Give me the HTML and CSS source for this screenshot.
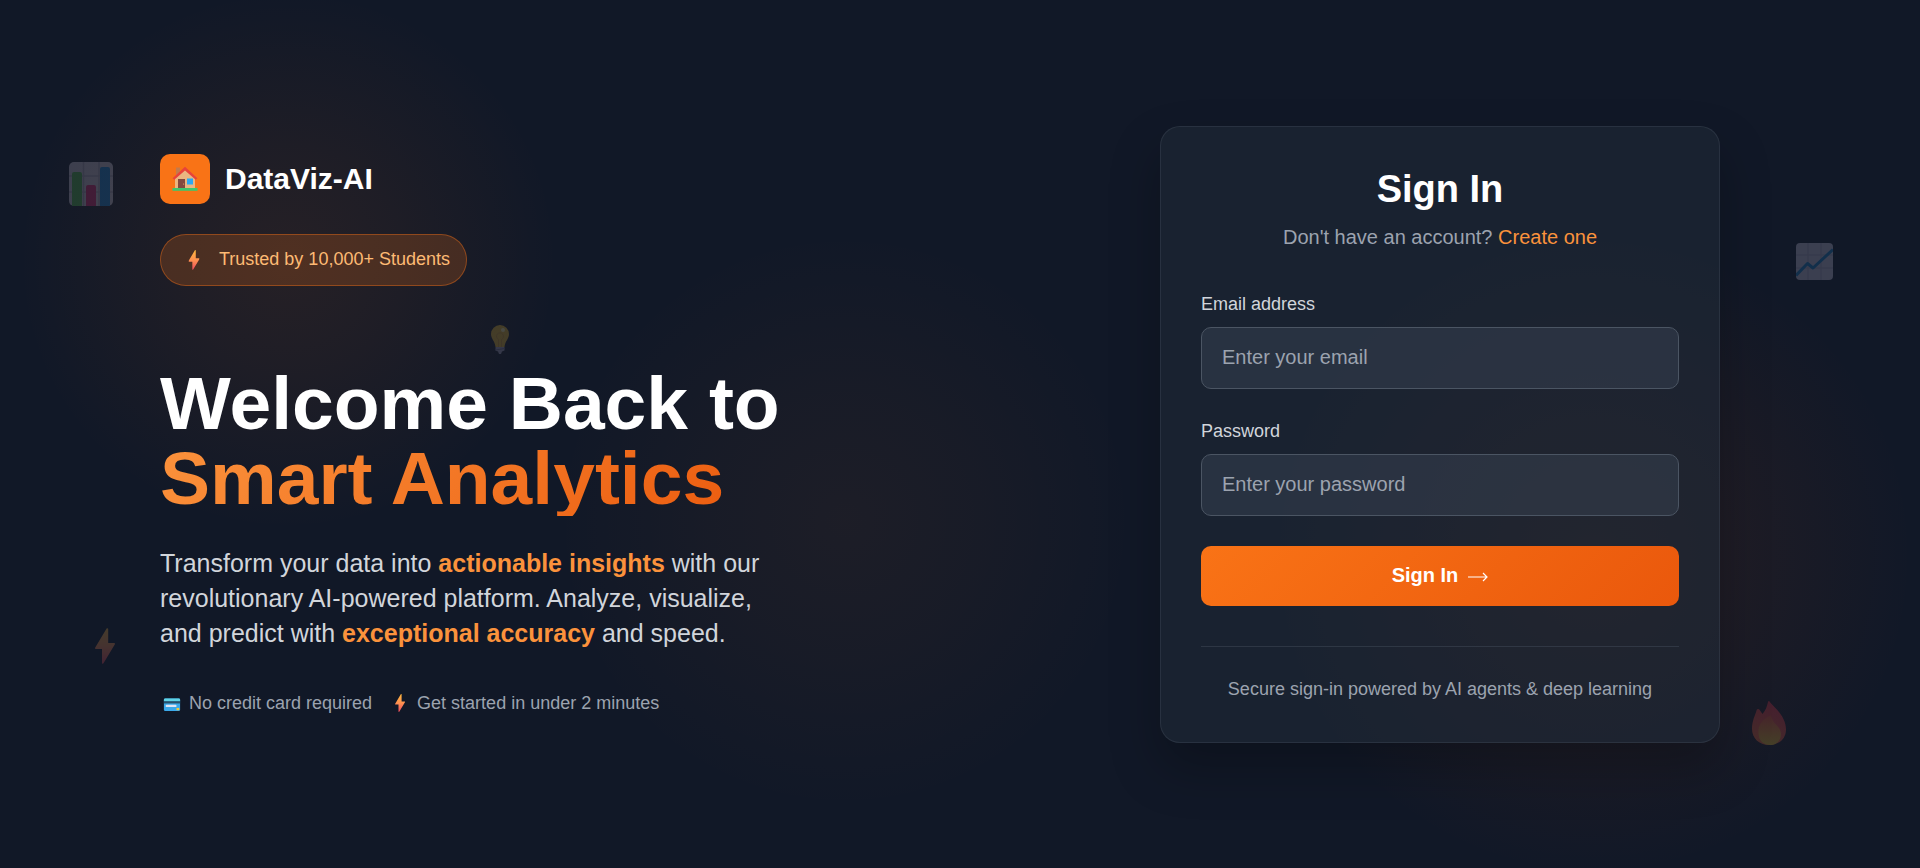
FILE: index.html
```html
<!DOCTYPE html>
<html lang="en">
<head>
<meta charset="utf-8">
<meta name="viewport" content="width=device-width, initial-scale=1">
<title>Sign In - DataViz-AI</title>
<link rel="stylesheet" href="styles.css">
</head>
<body>
<svg class="defs" width="0" height="0" aria-hidden="true">
  <defs>
    <linearGradient id="boltFill" x1="0" y1="0" x2="0" y2="1">
      <stop offset="0" stop-color="#ffb83d"/><stop offset=".5" stop-color="#ff9150"/><stop offset="1" stop-color="#ee4a5e"/>
    </linearGradient>
    <symbol id="bolt" viewBox="0 0 20 36">
      <path fill="url(#boltFill)" d="M11.600.6c.4-.8 1.600-.5 1.600.4V15h6c.7 0 1 .7.7 1.300L8.500 35.300c-.4.8-1.500.5-1.500-.4V21H.8c-.6 0-1-.7-.7-1.200z"/>
    </symbol>
  </defs>
</svg>
<main class="page">
  <div class="glow" aria-hidden="true"></div>

  <svg class="float float-bars" viewBox="0 0 44 44" aria-hidden="true">
    <rect width="44" height="44" rx="5" fill="#cfc8d8"/>
    <path d="M14.500 0v44M30 0v44M0 14h44M0 30h44" stroke="#aaa1b8" stroke-width="1.500"/>
    <path d="M3 44V12a2 2 0 0 1 2-2h6a2 2 0 0 1 2 2v32z" fill="#4fb548"/>
    <path d="M17 44V25a2 2 0 0 1 2-2h6a2 2 0 0 1 2 2v19z" fill="#d8256f"/>
    <path d="M31 44V7a2 2 0 0 1 2-2h6a2 2 0 0 1 2 2v37z" fill="#1384d8"/>
  </svg>
  <svg class="float float-line" viewBox="0 0 37 37" aria-hidden="true">
    <rect width="37" height="37" rx="4" fill="#cfc8e0"/>
    <path d="M12 0v37M25 0v37M0 12h37M0 25h37" stroke="#b1a9c4"/>
    <path d="M0 32.500 11.500 20.500l5.500 4.500L37 6.500" fill="none" stroke="#1681c9" stroke-width="3" stroke-linejoin="round"/>
  </svg>
  <svg class="float float-bulb" viewBox="0 0 18 29" aria-hidden="true">
    <path d="M9 0a9 9 0 0 1 9 9c0 5-4 7-4.500 13h-9C4 16 0 14 0 9a9 9 0 0 1 9-9z" fill="#e9b92e"/>
    <path d="M7.500 22V14.500a3.500 3.500 0 1 1 3 0V22" fill="none" stroke="#d3982e"/>
    <circle cx="12" cy="5" r="2" fill="#fff2a8"/>
    <path d="M4.500 22h9v3.500l-2.500 1-1 2.500H8l-1-2.500-2.500-1z" fill="#a5a0bd"/>
    <path d="m4.500 25 9-1.500" stroke="#777191"/>
  </svg>
  <svg class="float float-bolt" viewBox="0 0 20 36" aria-hidden="true"><use href="#bolt"/></svg>
  <svg class="float float-fire" viewBox="0 0 34 44" aria-hidden="true">
    <defs>
      <linearGradient id="fireOuter" x1=".7" y1="0" x2=".3" y2="1"><stop offset="0" stop-color="#e32f4c"/><stop offset="1" stop-color="#f26b3a"/></linearGradient>
      <linearGradient id="fireInner" x1="0" y1="0" x2="0" y2="1"><stop offset="0" stop-color="#f0503c"/><stop offset="1" stop-color="#ecc62f"/></linearGradient>
    </defs>
    <path d="M17.500.4C22 6 34 15 34 28.500 34 38 27 44 17 44S0 37 0 28C0 19 3.500 14 4.500 9.500c.3-1.500 2-2 3-.8L10.500 13c3-3.500 4.500-7.500 5.500-12 .2-.8 1-1.200 1.500-.6z" fill="url(#fireOuter)"/>
    <path d="M19 14C7 20 6 27 6.500 33 7 40 12 44 18 44s11-4 11-11c0-8-9-10-10-19z" fill="url(#fireInner)"/>
  </svg>

  <section class="intro">
    <div class="intro-content">
      <div class="brand">
        <span class="brand-mark">
          <svg class="house" viewBox="0 0 26 26" aria-hidden="true">
            <path d="M4 1.500h4V10H4z" fill="#c57a4a"/>
            <path d="M3 11.500 13 2.500l10 9V22H3z" fill="#eab681"/>
            <path d="M.6 12.300 13 .8l12.400 11.500-1.700 1.500L13 4.500 2.300 13.800z" fill="#e8433a"/>
            <path d="M6 13h7v9.500H6z" fill="#84493f"/>
            <circle cx="11.600" cy="18" r=".6" fill="#f0b070"/>
            <path d="M15 12.500h6v6h-6z" fill="#2ba8f2"/>
            <path d="M.5 22h25v2.800H.5z" fill="#3fc56c"/>
          </svg>
        </span>
        <span class="brand-name">DataViz-AI</span>
      </div>
      <div class="badge">
        <svg class="badge-icon" viewBox="0 0 20 36" aria-hidden="true"><use href="#bolt"/></svg>
        <span>Trusted by 10,000+ Students</span>
      </div>
      <h1 class="headline">Welcome Back to <span class="headline-accent">Smart Analytics</span></h1>
      <p class="lead">Transform your data into <strong>actionable insights</strong> with our revolutionary AI-powered platform. Analyze, visualize, and predict with <strong>exceptional accuracy</strong> and speed.</p>
      <ul class="perks">
        <li class="perk">
          <svg class="perk-icon" viewBox="0 0 24 20" aria-hidden="true">
            <rect x="3" y="5" width="18" height="14" rx="1.500" fill="#3ba9ea"/>
            <path d="M3 8V6.500A1.500 1.500 0 0 1 4.500 5h15A1.500 1.500 0 0 1 21 6.500V8z" fill="#5fd3e6"/>
            <path d="M3 8h18v2.500H3z" fill="#28516b"/>
            <rect x="5" y="12" width="12" height="2.500" rx="1" fill="#e0e3f2"/>
            <path d="M17 15.500h3V18h-3z" fill="#f3c63c"/>
          </svg>
          <span>No credit card required</span>
        </li>
        <li class="perk">
          <svg class="perk-icon" viewBox="0 0 20 36" aria-hidden="true"><use href="#bolt"/></svg>
          <span>Get started in under 2 minutes</span>
        </li>
      </ul>
    </div>
  </section>

  <section class="access">
    <div class="card">
      <header class="card-header">
        <h2 class="card-title">Sign In</h2>
        <p class="card-subtitle">Don't have an account? <a class="link" href="#">Create one</a></p>
      </header>
      <form class="form">
        <div class="field">
          <label class="label" for="email">Email address</label>
          <input class="input" id="email" type="email" placeholder="Enter your email">
        </div>
        <div class="field">
          <label class="label" for="password">Password</label>
          <input class="input" id="password" type="password" placeholder="Enter your password">
        </div>
        <button class="submit" type="submit">
          <span>Sign In</span>
          <svg class="arrow" viewBox="0 0 20 12" aria-hidden="true"><path d="M0 7h19M15 3l4 4-4 4" fill="none" stroke="currentColor" stroke-width="1.200"/></svg>
        </button>
      </form>
      <footer class="card-footer">Secure sign-in powered by AI agents &amp; deep learning</footer>
    </div>
  </section>
</main>
</body>
</html>
```
FILE: styles.css
```css
* {
  box-sizing: border-box;
}

body {
  margin: 0;
  background: #111827;
  color: #fff;
  font-family: "Liberation Sans", Arial, sans-serif;
}

h1, h2, p, ul {
  margin: 0;
  padding: 0;
}

.defs {
  position: absolute;
}

.page {
  position: relative;
  display: grid;
  grid-template-columns: 1fr 1fr;
  align-items: center;
  min-height: 100vh;
  overflow: hidden;
}

.glow {
  position: absolute;
  inset: 0;
  background:
    radial-gradient(circle 270px at 15% 30%, rgba(249, 115, 22, 0.09), rgba(249, 115, 22, 0.06) 40%, rgba(249, 115, 22, 0) 100%),
    radial-gradient(circle 290px at 44% 60%, rgba(249, 130, 40, 0.05), rgba(249, 130, 40, 0.03) 45%, rgba(249, 130, 40, 0) 100%),
    radial-gradient(circle 320px at 83% 64%, rgba(234, 88, 12, 0.1), rgba(234, 88, 12, 0.06) 45%, rgba(234, 88, 12, 0) 100%);
}

/* Decorative icons scattered over the backdrop */
.float {
  position: absolute;
  opacity: 0.22;
}

.float-bars {
  top: 162px;
  left: 69px;
  width: 44px;
}

.float-line {
  top: 243px;
  right: 87px;
  width: 37px;
}

.float-bulb {
  top: 325px;
  left: 491px;
  width: 18px;
}

.float-bolt {
  bottom: 204px;
  left: 95px;
  width: 20px;
}

.float-fire {
  right: 134px;
  bottom: 123px;
  width: 34px;
}

.intro,
.access {
  position: relative;
}

.intro {
  padding-left: 160px;
}

.intro-content {
  max-width: 630px;
}

.brand {
  display: flex;
  align-items: center;
  gap: 15px;
}

.brand-mark {
  display: flex;
  align-items: center;
  justify-content: center;
  width: 50px;
  height: 50px;
  border-radius: 10px;
  background: #f97316;
}

.house {
  width: 26px;
  height: 26px;
}

.brand-name {
  font-size: 30px;
  font-weight: 700;
}

.badge {
  display: inline-flex;
  align-items: center;
  gap: 12px;
  height: 52px;
  margin-top: 30px;
  padding: 0 16px 0 20px;
  border: 1px solid rgba(249, 115, 22, 0.4);
  border-radius: 26px;
  background: rgba(249, 115, 22, 0.2);
  color: #fdba74;
  font-size: 18px;
}

.badge-icon {
  width: 26px;
  height: 20px;
}

.headline {
  margin-top: 80px;
  font-size: 75px;
  font-weight: 700;
  line-height: 1;
}

.headline-accent {
  display: block;
  background: linear-gradient(135deg, #fb923c, #ea580c);
  background-clip: text;
  -webkit-background-clip: text;
  color: transparent;
}

.lead {
  margin-top: 30px;
  color: #d1d5db;
  font-size: 25px;
  line-height: 35px;
}

.lead strong {
  color: #fb923c;
}

.perks {
  display: flex;
  gap: 16px;
  margin-top: 40px;
  color: #9ca3af;
  font-size: 18px;
  line-height: 24px;
  list-style: none;
}

.perk {
  display: flex;
  align-items: center;
  gap: 5px;
}

.perk-icon {
  width: 24px;
  height: 18px;
}

.access {
  display: flex;
  justify-content: center;
}

.card {
  width: 100%;
  max-width: 560px;
  padding: 40px;
  border: 1px solid rgba(75, 85, 99, 0.3);
  border-radius: 20px;
  background: rgba(31, 41, 55, 0.6);
  box-shadow: 0 25px 50px rgba(0, 0, 0, 0.25);
}

.card-header {
  margin-bottom: 45px;
  text-align: center;
}

.card-title {
  font-size: 38px;
  line-height: 44px;
}

.card-subtitle {
  margin-top: 15px;
  color: #9ca3af;
  font-size: 20px;
  line-height: 23px;
}

.link {
  color: #fb923c;
  text-decoration: none;
}

.field {
  display: flex;
  flex-direction: column;
  gap: 12px;
}

.field + .field {
  margin-top: 32px;
}

.label {
  color: #d1d5db;
  font-size: 18px;
  line-height: 21px;
}

.input {
  width: 100%;
  height: 62px;
  padding: 0 20px;
  border: 1px solid #4b5563;
  border-radius: 10px;
  background: rgba(55, 65, 81, 0.5);
  color: #fff;
  font: inherit;
  font-size: 20px;
}

.input::placeholder {
  color: #9ca3af;
}

.submit {
  display: flex;
  align-items: center;
  justify-content: center;
  gap: 10px;
  width: 100%;
  height: 60px;
  margin-top: 30px;
  padding: 0;
  border: 0;
  border-radius: 10px;
  background: linear-gradient(135deg, #f97316, #ea580c);
  color: #fff;
  font: inherit;
  font-size: 20px;
  font-weight: 700;
}

.arrow {
  width: 20px;
  height: 12px;
}

.card-footer {
  margin-top: 40px;
  padding-top: 30px;
  border-top: 1px solid rgba(75, 85, 99, 0.4);
  color: #9ca3af;
  font-size: 18px;
  line-height: 25px;
  text-align: center;
}
```
